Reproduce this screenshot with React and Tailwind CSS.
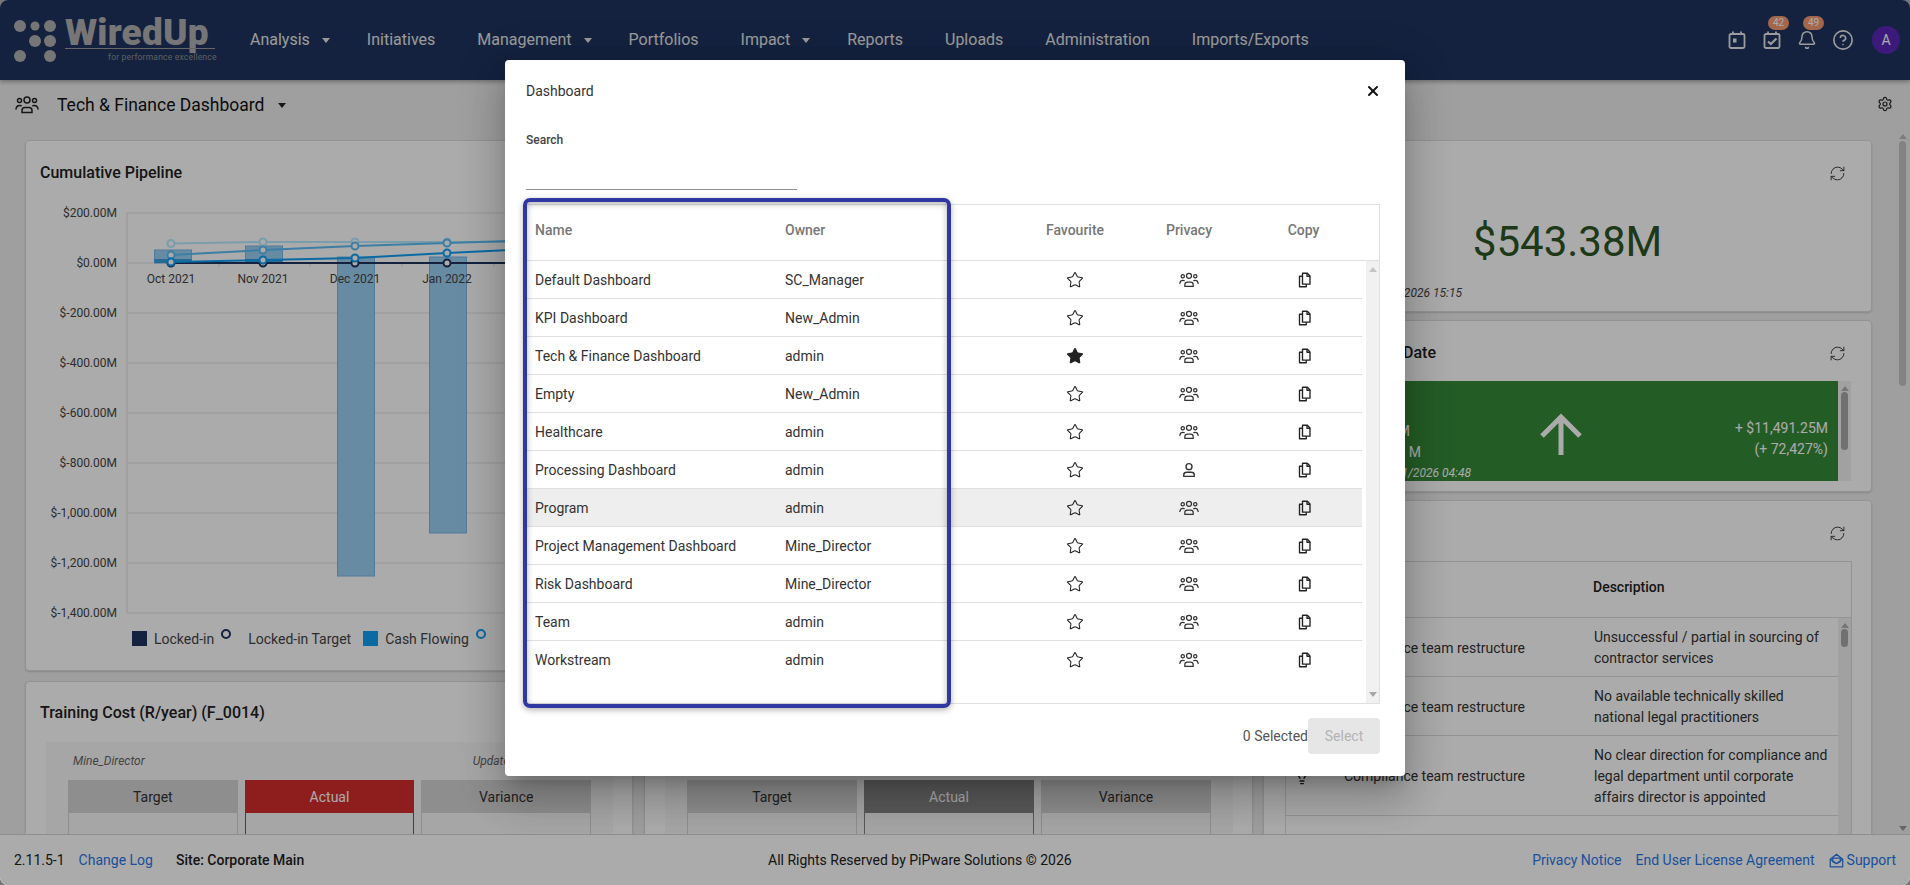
import { Bell, CircleHelp, RefreshCw, Settings, Star, X, Lightbulb } from 'lucide-react';

const NAV = [
  { label: 'Analysis', caret: true },
  { label: 'Initiatives' },
  { label: 'Management', caret: true },
  { label: 'Portfolios' },
  { label: 'Impact', caret: true },
  { label: 'Reports' },
  { label: 'Uploads' },
  { label: 'Administration' },
  { label: 'Imports/Exports' },
];

const DASHBOARDS = [
  { name: 'Default Dashboard', owner: 'SC_Manager' },
  { name: 'KPI Dashboard', owner: 'New_Admin' },
  { name: 'Tech & Finance Dashboard', owner: 'admin', favourite: true },
  { name: 'Empty', owner: 'New_Admin' },
  { name: 'Healthcare', owner: 'admin' },
  { name: 'Processing Dashboard', owner: 'admin', personal: true },
  { name: 'Program', owner: 'admin', hovered: true },
  { name: 'Project Management Dashboard', owner: 'Mine_Director' },
  { name: 'Risk Dashboard', owner: 'Mine_Director' },
  { name: 'Team', owner: 'admin' },
  { name: 'Workstream', owner: 'admin' },
];

const RISKS = [
  { name: 'Compliance team restructure', desc: 'Unsuccessful / partial in sourcing of contractor services', h: 'h-[59px]' },
  { name: 'Compliance team restructure', desc: 'No available technically skilled national legal practitioners', h: 'h-[59px]' },
  { name: 'Compliance team restructure', desc: 'No clear direction for compliance and legal department until corporate affairs director is appointed', h: 'h-[80px]', bulb: true },
  { name: 'Site Legal', desc: 'Talent is not available locally', h: 'h-[59px]', star: true },
];

const Y_TICKS = [
  ['$200.00M', 213], ['$0.00M', 263], ['$-200.00M', 313], ['$-400.00M', 363],
  ['$-600.00M', 413], ['$-800.00M', 463], ['$-1,000.00M', 513], ['$-1,200.00M', 563], ['$-1,400.00M', 613],
];

const MONTHS = [['Oct 2021', 171], ['Nov 2021', 263], ['Dec 2021', 355], ['Jan 2022', 447]];

const LINES = [
  { color: '#b6eaff', ys: [243.5, 242, 242, 242], end: 242 },
  { color: '#5bbcf5', ys: [255, 250, 246, 243], end: 241 },
  { color: '#1e345e', ys: [263, 263, 263, 263], end: 263 },
  { color: '#10a0f5', ys: [262, 260, 258, 253], end: 250 },
];

function Caret({ className }) {
  return <span className={`inline-block w-0 h-0 border-x-[4.5px] border-x-transparent border-t-[5px] ${className}`} />;
}

function GroupIcon({ className }) {
  return (
    <svg viewBox="0 0 24 24" fill="none" stroke="currentColor" strokeWidth="1.5" strokeLinecap="round" className={className}>
      <circle cx="12" cy="7" r="3" />
      <circle cx="4.5" cy="7.5" r="2" />
      <circle cx="19.5" cy="7.5" r="2" />
      <path d="M7 19.500v-2c0-2 1.600-3 3-3h4c1.400 0 3 1 3 3v2z" />
      <path d="M1 16c.3-2 1.700-3.500 3.600-3.500.6 0 1.100.1 1.600.3" />
      <path d="M23 16c-.3-2-1.700-3.500-3.600-3.500-.6 0-1.100.1-1.600.3" />
    </svg>
  );
}

function PersonIcon({ className }) {
  return (
    <svg viewBox="0 0 24 24" fill="none" stroke="currentColor" strokeWidth="1.800" className={className}>
      <circle cx="12" cy="7.500" r="4" />
      <path d="M5 20.500v-2c0-2.200 2-3.500 4-3.500h6c2 0 4 1.300 4 3.500v2z" />
    </svg>
  );
}

function CopyIcon({ className }) {
  return (
    <svg viewBox="0 0 24 24" fill="none" stroke="currentColor" strokeWidth="1.800" strokeLinejoin="round" className={className}>
      <path d="M10 3h6.500L20 6.500V17.500H10z" />
      <path d="M16 3v4h4" />
      <path d="M10 7H6v14h9v-3.500" />
    </svg>
  );
}

function CalendarIcon({ check }) {
  return (
    <svg width="20" height="20" viewBox="0 0 20 20" fill="none" stroke="currentColor" strokeWidth="1.800" className="text-[#e8e8e8]">
      <rect x="2.500" y="4" width="15" height="14" rx="1.500" />
      <path d="M6 1.500v3M14 1.500v3" />
      {check ? <path d="M6 11.500l2.800 2.600L14.500 8.500" strokeWidth="2.200" /> : <rect x="6" y="8.500" width="3.500" height="4" fill="currentColor" stroke="none" />}
    </svg>
  );
}

function Logo() {
  return (
    <div className="relative w-[200px] h-[52px] ml-[14px] shrink-0">
      <svg width="50" height="52" viewBox="0 0 50 52" className="absolute left-0 top-0 fill-[#b0b0b0]">
        <circle cx="6" cy="12" r="6" />
        <circle cx="21" cy="12" r="4.500" />
        <circle cx="36" cy="12" r="6" />
        <circle cx="21" cy="27" r="6" />
        <circle cx="36" cy="27" r="6" />
        <circle cx="6" cy="42" r="6" />
        <circle cx="36" cy="42" r="6" />
      </svg>
      <span className="absolute left-[51px] top-[-3px] text-[37px] leading-[44px] font-black tracking-[0.2px] text-[#b0b0b0]">WiredUp</span>
      <span className="absolute left-[51px] top-[34px] w-[150px] border-t border-[#9a9a9a]" />
      <span className="absolute left-[94px] top-[37px] text-[8.500px] leading-[12px] tracking-[0.2px] text-[#8f8f8f] whitespace-nowrap">for performance excellence</span>
    </div>
  );
}

function Header() {
  return (
    <header className="h-20 shrink-0 bg-[#1e345e] flex items-center shadow-[0_2px_4px_rgba(0,0,0,0.3)] relative z-10">
      <Logo />
      <nav className="flex items-center gap-[42px] ml-[36px] text-base text-[#e6e6e6]">
        {NAV.map((item) => (
          <span key={item.label} className={`flex items-center gap-[12px] whitespace-nowrap ${item.caret ? 'mr-[-5px]' : ''}`}>
            {item.label}
            {item.caret && <Caret className="border-t-[#e6e6e6]" />}
          </span>
        ))}
      </nav>
      <div className="ml-auto flex items-center gap-[15px] pr-[10px] text-[#d8d8d8]">
        <CalendarIcon />
        <span className="relative flex">
          <CalendarIcon check />
          <span className="absolute left-[6px] top-[-14px] w-[21px] h-[14px] rounded-full bg-[#f59a70] text-white text-[10px] leading-[14px] text-center">42</span>
        </span>
        <span className="relative flex">
          <Bell size={20} strokeWidth={1.800} className="text-[#e8e8e8]" />
          <span className="absolute left-[6px] top-[-14px] w-[21px] h-[14px] rounded-full bg-[#f59a70] text-white text-[10px] leading-[14px] text-center">49</span>
        </span>
        <CircleHelp size={22} strokeWidth={1.800} className="text-[#e8e8e8]" />
        <span className="ml-[3px] w-[28px] h-[28px] rounded-full bg-[#5a28b8] text-white text-sm flex items-center justify-center">A</span>
      </div>
    </header>
  );
}

function Card({ className, children }) {
  return <section className={`bg-white border border-[#dcdcdc] rounded-[4px] shadow-[0_1px_2px_rgba(0,0,0,0.15)] ${className}`}>{children}</section>;
}

function PipelineChart() {
  const xs = [171, 263, 355, 447];
  return (
    <Card className="h-[531px] flex flex-col">
      <h2 className="pl-[14px] pt-[21px] text-base leading-[21px] font-medium text-[#222]">Cumulative Pipeline</h2>
      <svg viewBox="26 200 1226 428" className="w-[1226px] h-[428px] mt-[17px] shrink-0 text-[12px]">
        {Y_TICKS.map(([label, y]) => (
          <g key={label}>
            <line x1="127" x2="1240" y1={y} y2={y} stroke="#e3e3e3" />
            <text x="117" y={y + 4} textAnchor="end" fill="#444">{label}</text>
          </g>
        ))}
        <line x1="127" x2="127" y1="213" y2="613" stroke="#e0e0e0" />
        {[219, 310, 402, 494].map((x) => (
          <line key={x} x1={x} x2={x} y1="263" y2="267" stroke="#ddd" />
        ))}
        <rect x="154.500" y="250" width="37" height="13" fill="#9cd0f5" stroke="#78b8e8" />
        <rect x="154.500" y="259" width="37" height="4" fill="#3d9fe0" />
        <rect x="245.500" y="246" width="37" height="17" fill="#9cd0f5" stroke="#78b8e8" />
        <rect x="245.500" y="259" width="37" height="4" fill="#3d9fe0" />
        <rect x="337.500" y="257" width="37" height="319" fill="#9cd0f5" stroke="#78b8e8" />
        <rect x="429.500" y="257" width="37" height="276" fill="#9cd0f5" stroke="#78b8e8" />
        {MONTHS.map(([label, x]) => (
          <text key={label} x={x} y="283" textAnchor="middle" fill="#444">{label}</text>
        ))}
        {LINES.map((line) => (
          <g key={line.color}>
            <polyline
              fill="none"
              stroke={line.color}
              strokeWidth="2"
              points={`${xs.map((x, i) => `${x},${line.ys[i]}`).join(' ')} 510,${line.end}`}
            />
            {xs.map((x, i) => (
              <circle key={x} cx={x} cy={line.ys[i]} r="3.500" fill="#fff" stroke={line.color} strokeWidth="2" />
            ))}
          </g>
        ))}
      </svg>
      <div className="flex items-center pl-[106px] pt-[1px] h-[20px] text-sm text-[#444] whitespace-nowrap">
        <span className="w-[15px] h-[15px] bg-[#1e345e] mr-[7px]" />
        Locked-in
        <span className="w-[10px] h-[10px] rounded-full border-2 border-[#1e345e] ml-[7px] mr-[17px] mb-[10px]" />
        Locked-in Target
        <span className="w-[15px] h-[15px] bg-[#10a0f5] ml-[12px] mr-[7px]" />
        Cash Flowing
        <span className="w-[10px] h-[10px] rounded-full border-2 border-[#10a0f5] ml-[7px] mb-[10px]" />
      </div>
    </Card>
  );
}

function Widget({ title, actualClass, className }) {
  return (
    <Card className={`h-[200px] ${className}`}>
      <h2 className="pl-[14px] pt-[20px] text-base leading-[21px] font-medium text-[#222]">{title}</h2>
      <div className="ml-[20px] mr-[19px] mt-[19px] bg-[#f8f8f8] px-[22px] pt-[11px] h-[140px]">
        <div className="flex justify-between pl-[5px] mr-[-22px] text-xs italic text-[#666] leading-[16px] h-[27px] whitespace-nowrap">
          <span>Mine_Director</span>
          <span>Updated 02/01/2026 15:15</span>
        </div>
        <div className="grid grid-cols-3 gap-[7px] text-sm text-center">
          <div className="border border-[#d4d4d4] h-[100px]">
            <div className="bg-[#d4d4d4] h-[32px] leading-[32px] text-[#333]">Target</div>
          </div>
          <div className={`border h-[100px] ${actualClass}`}>
            <div className="h-[32px] leading-[32px] text-white">Actual</div>
          </div>
          <div className="border border-[#d4d4d4] h-[100px]">
            <div className="bg-[#d4d4d4] h-[32px] leading-[32px] text-[#333]">Variance</div>
          </div>
        </div>
      </div>
    </Card>
  );
}

function RightColumn() {
  return (
    <div className="w-[609px] shrink-0 flex flex-col gap-[8px]">
      <Card className="h-[172px] relative">
        <RefreshCw size={17} strokeWidth={1.300} className="absolute right-[25px] top-[24px] text-[#333]" />
        <div className="pt-[73px] text-center text-[42px] leading-[56px] text-[#2d5524]">$543.38M</div>
        <div className="w-[176px] ml-[22px] mt-[15px] text-right text-xs italic text-[#444] whitespace-nowrap">Updated 02/01/2026 15:15</div>
      </Card>
      <Card className="h-[172px] relative">
        <RefreshCw size={17} strokeWidth={1.300} className="absolute right-[25px] top-[24px] text-[#333]" />
        <h2 className="pl-[139px] pt-[21px] text-base leading-[21px] font-medium text-[#222]">Date</h2>
        <div className="flex ml-[21px] mt-[18px] h-[100px]">
          <div className="w-[553px] bg-[#378a39] text-white grid grid-cols-3 text-sm leading-[21px]">
            <div className="self-end pl-[20px] whitespace-nowrap">
              <div className="w-[105px] text-right">Target: $15.87M</div>
              <div className="w-[116px] text-right">Actual: $11,507 M</div>
              <div className="w-[166px] mt-[2px] text-right text-xs italic">Updated 02/01/2026 04:48</div>
            </div>
            <svg viewBox="0 0 44 44" className="w-[44px] h-[44px] justify-self-center self-center mt-[8px]" fill="none" stroke="#fff" strokeWidth="5">
              <path d="M22 42V4M3 23L22 4l19 19" />
            </svg>
            <div className="self-center text-right pr-[10px] mt-[16px]">
              <div>+ $11,491.25M</div>
              <div>(+ 72,427%)</div>
            </div>
          </div>
          <ScrollTrack thumbClass="h-[58px] mt-[1px]" />
        </div>
      </Card>
      <Card className="h-[400px] relative">
        <RefreshCw size={17} strokeWidth={1.300} className="absolute right-[25px] top-[24px] text-[#333]" />
        <div className="ml-[21px] mt-[60px] w-[567px] border border-[#dcdcdc] border-b-0">
          <div className="h-[56px] pb-[6px] border-b border-[#dcdcdc] flex items-center pl-[307px] text-sm font-medium text-[#222]">Description</div>
          <div className="flex">
            <div className="w-[552px] shrink-0">
              {RISKS.map((risk, i) => (
                <div key={i} className={`grid grid-cols-[58px_250px_1fr] items-center pt-[2px] border-b border-[#dcdcdc] text-sm leading-[21px] text-[#333] ${risk.h}`}>
                  <span className="flex justify-center pr-[26px]">
                    {risk.star ? <Star size={18} strokeWidth={1.500} /> : <Lightbulb size={16} strokeWidth={2} className="text-[#222]" />}
                  </span>
                  <span className="whitespace-nowrap">{risk.name}</span>
                  <span className="pr-[8px]">{risk.desc}</span>
                </div>
              ))}
            </div>
            <ScrollTrack thumbClass="h-[18px] mt-[1px]" />
          </div>
        </div>
      </Card>
    </div>
  );
}

function ScrollTrack({ thumbClass }) {
  return (
    <div className="w-[13px] bg-[#f1f1f1] flex flex-col items-center pt-[5px]">
      <span className="w-0 h-0 border-x-[4px] border-x-transparent border-b-[5px] border-b-[#b0b0b0]" />
      <span className={`w-[7px] rounded-full bg-[#a8a8a8] ${thumbClass}`} />
    </div>
  );
}

function Footer() {
  return (
    <footer className="h-[51px] shrink-0 bg-white border-t border-[#d4d4d4] flex items-center pl-[14px] pr-[14px] text-sm text-[#222] relative z-10 whitespace-nowrap">
      <span>2.11.5-1</span>
      <span className="ml-[14px] text-[#2a78e8]">Change Log</span>
      <span className="ml-[23px] font-medium">Site: Corporate Main</span>
      <span className="absolute left-[768px]">All Rights Reserved by PiPware Solutions © 2026</span>
      <span className="ml-auto text-[#2a78e8]">Privacy Notice</span>
      <span className="ml-[14px] text-[#2a78e8]">End User License Agreement</span>
      <span className="ml-[14px] flex items-center gap-[3px] text-[#2a78e8]">
        <svg width="15" height="15" viewBox="0 0 24 24" fill="none" stroke="currentColor" strokeWidth="2" strokeLinejoin="round">
          <path d="M2 10l10-8 10 8v12H2z" />
          <path d="M6 8h12v6l-6 3-6-3zM2 10l10 7 10-7" />
        </svg>
        Support
      </span>
    </footer>
  );
}

function PageScrollbar() {
  return (
    <div className="absolute right-0 top-[130px] bottom-[51px] w-[15px] bg-[#eeeeee] flex flex-col items-center pt-[4px]">
      <span className="w-0 h-0 border-x-[4px] border-x-transparent border-b-[5px] border-b-[#bbb]" />
      <span className="w-[7px] h-[245px] mt-[2px] rounded-full bg-[#c4c4c4]" />
      <span className="mt-auto mb-[3px] w-0 h-0 border-x-[4px] border-x-transparent border-t-[5px] border-t-[#999]" />
    </div>
  );
}

function DashboardRow({ row }) {
  return (
    <div className={`grid grid-cols-[258px_233px_114px_114px_115px] items-center h-[38px] text-sm text-[#333] ${row.hovered ? 'bg-[#eeeeee]' : ''} ${row.name === 'Workstream' ? '' : 'border-b border-[#e0e0e0]'}`}>
      <span className="pl-[8px] whitespace-nowrap">{row.name}</span>
      <span>{row.owner}</span>
      <span className="flex justify-center">
        <Star size={18} strokeWidth={1.400} className={row.favourite ? 'fill-[#222] text-[#222]' : 'text-[#222]'} />
      </span>
      <span className="flex justify-center">
        {row.personal ? <PersonIcon className="w-[18px] h-[18px] text-[#333]" /> : <GroupIcon className="w-[20px] h-[20px] text-[#333]" />}
      </span>
      <span className="flex justify-center">
        <CopyIcon className="w-[18px] h-[18px] text-[#222]" />
      </span>
    </div>
  );
}

function DashboardModal() {
  return (
    <div className="absolute inset-0 bg-black/[.33] z-20 flex justify-center items-start pt-[60px]">
      <div className="relative w-[900px] h-[716px] bg-white rounded-[4px] pl-[21px] pr-[25px] shadow-[0_11px_15px_-7px_rgba(0,0,0,0.2),0_24px_38px_3px_rgba(0,0,0,0.14),0_9px_46px_8px_rgba(0,0,0,0.12)]">
        <div className="flex items-center justify-between h-[62px] text-sm text-[#333]">
          Dashboard
          <X size={16} strokeWidth={3} className="text-[#111] mr-[-1px]" />
        </div>
        <div className="text-xs leading-[16px] font-medium text-[#444] mt-[10px]">Search</div>
        <div className="w-[271px] h-px bg-[#8f8f8f] mt-[41px]" />
        <div className="mt-[14px] border border-[#e0e0e0] h-[500px] flex flex-col">
          <div className="grid grid-cols-[258px_233px_114px_114px_115px] items-center h-[56px] pb-[6px] text-sm font-medium text-[#777] border-b border-[#e0e0e0] shrink-0">
            <span className="pl-[8px]">Name</span>
            <span>Owner</span>
            <span className="text-center">Favourite</span>
            <span className="text-center">Privacy</span>
            <span className="text-center">Copy</span>
          </div>
          <div className="flex flex-1 min-h-0">
            <div className="w-[835px] shrink-0">
              {DASHBOARDS.map((row) => (
                <DashboardRow key={row.name} row={row} />
              ))}
            </div>
            <div className="ml-auto w-[13px] bg-[#f1f1f1] flex flex-col items-center justify-between py-[6px]">
              <span className="w-0 h-0 border-x-[4px] border-x-transparent border-b-[5px] border-b-[#c4c4c4]" />
              <span className="w-0 h-0 border-x-[4px] border-x-transparent border-t-[5px] border-t-[#a8a8a8]" />
            </div>
          </div>
        </div>
        <div className="flex justify-end items-center mt-[14px] text-sm">
          <span className="text-[#555]">0 Selected</span>
          <span className="w-[72px] h-[36px] rounded-[4px] bg-[#e6e6e6] text-[#b4b4b4] flex items-center justify-center">Select</span>
        </div>
        {/* callout drawn over the Name / Owner columns */}
        <div className="absolute left-[18px] top-[138px] w-[428px] h-[510px] border-[4px] border-[#2f37a0] rounded-[7px] shadow-[0_2px_6px_rgba(0,0,0,0.3),inset_0_2px_6px_rgba(0,0,0,0.3)] pointer-events-none" />
      </div>
    </div>
  );
}

export default function App() {
  return (
    <div className="h-screen w-screen bg-[#777777] font-['Roboto',sans-serif]">
      <div className="relative h-full w-full overflow-hidden rounded-[8px] bg-[#eeeeee] flex flex-col">
        <Header />
        <main className="flex-1 min-h-0 overflow-hidden">
          <div className="h-[50px] flex items-center pl-[15px] pr-[17px] text-[17.5px] text-[#111]">
            <GroupIcon className="w-[24px] h-[24px] text-[#222]" />
            <span className="ml-[18px]">Tech & Finance Dashboard</span>
            <Caret className="ml-[14px] border-t-[#222]" />
            <Settings size={16} strokeWidth={1.800} className="ml-auto mb-[2px] text-[#222]" />
          </div>
          <div className="flex gap-[10px] pl-[25px] pt-[10px]">
            <div className="w-[1228px] shrink-0 flex flex-col gap-[10px]">
              <PipelineChart />
              <div className="flex gap-[11px]">
                <Widget title="Training Cost (R/year) (F_0014)" actualClass="border-[#d42e2e] [&>div]:bg-[#d42e2e]" className="w-[608px] shrink-0" />
                <Widget title="Training Cost (R/year)" actualClass="border-[#858585] [&>div]:bg-[#858585]" className="w-[609px] shrink-0" />
              </div>
            </div>
            <RightColumn />
          </div>
        </main>
        <Footer />
        <PageScrollbar />
        <DashboardModal />
      </div>
    </div>
  );
}
